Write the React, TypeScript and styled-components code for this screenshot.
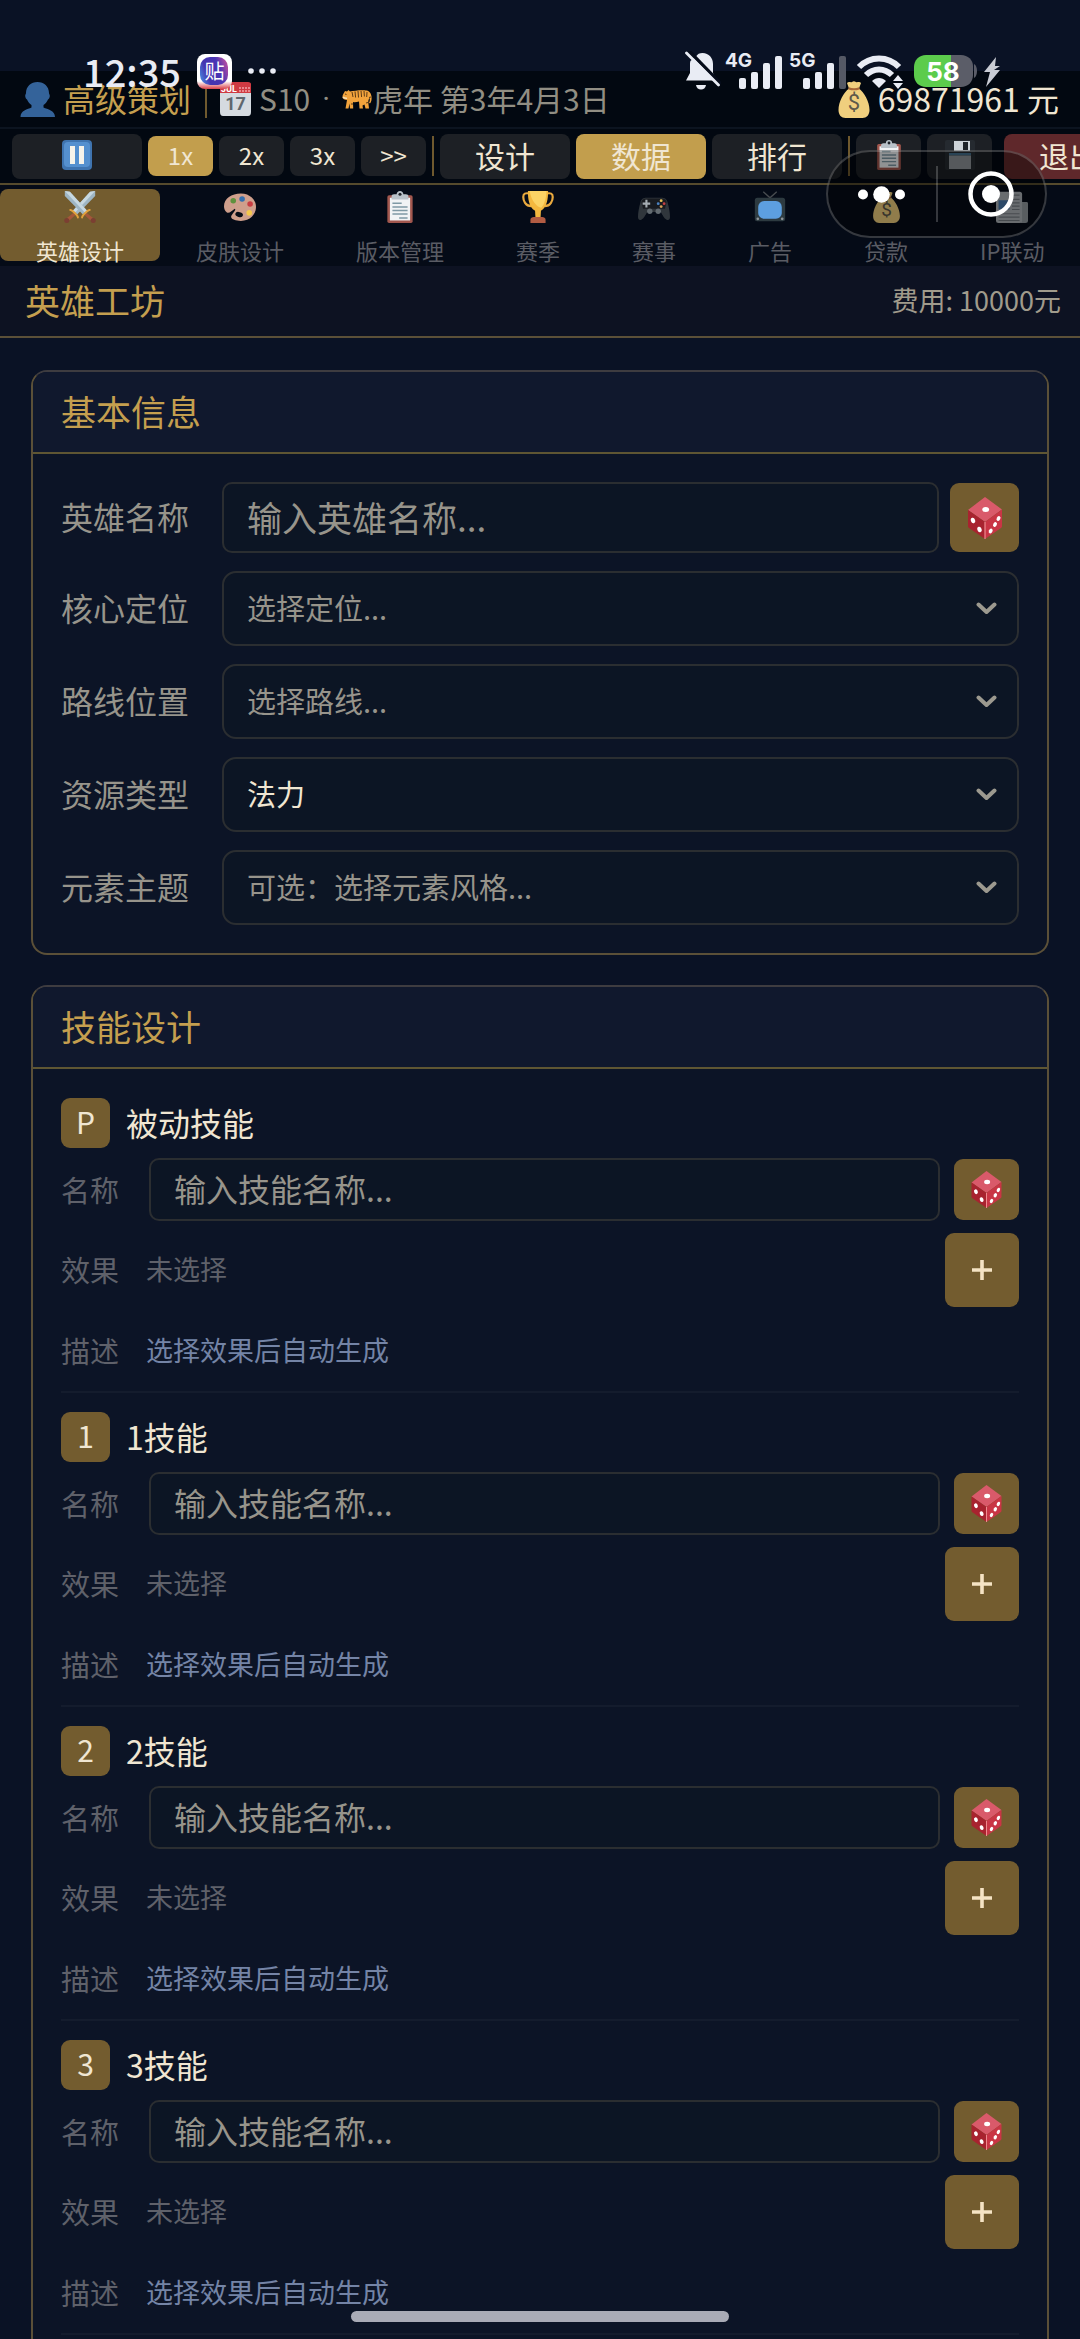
// React
import { useState } from 'react';
// Styles
import styled, { createGlobalStyle } from 'styled-components';

import type { FC, ReactNode } from 'react';

const GlobalStyle = createGlobalStyle`
  * {
    box-sizing: border-box;
  }
  body {
    margin: 0;
    background: #0a1225;
  }
  button,
  input,
  select {
    font-family: inherit;
    margin: 0;
  }
`;

const Shell = styled.div`
  position: relative;
  display: flex;
  flex-direction: column;
  height: 100vh;
  padding-top: 71px;
  overflow: hidden;
  background: #0a1225;
  color: #f0e6d2;
  font-family: 'Noto Sans CJK SC', sans-serif;
`;

/* ---------- phone overlays ---------- */

const StatusBar = styled.div`
  position: absolute;
  top: 50px;
  left: 0;
  right: 0;
  z-index: 2;
  display: flex;
  align-items: center;
  justify-content: space-between;
  height: 42px;
  padding: 0 79px 0 83px;
  color: #e9ecf4;
`;

const StatusGroup = styled.div<{ $gap: number }>`
  display: flex;
  align-items: center;
  gap: ${({ $gap }) => $gap}px;
`;

const Clock = styled.span`
  font-size: 38px;
  font-weight: 500;
  line-height: 42px;
`;

const AppBadge = styled.span`
  display: flex;
  align-items: center;
  justify-content: center;
  width: 35px;
  height: 35px;
  border-radius: 8px;
  background: linear-gradient(180deg, #fff 0%, #fff 78%, #d8404a 100%);
`;

const AppBadgeInner = styled.span`
  width: 28px;
  height: 28px;
  border-radius: 10px;
  background: linear-gradient(250deg, #d8549c 0%, #4a35b4 35%, #4434b0 70%, #4a9ae8 100%);
  color: #fff;
  font-size: 20px;
  line-height: 27px;
  text-align: center;
`;

const Capsule = styled.div`
  position: absolute;
  top: 150px;
  right: 33px;
  z-index: 2;
  display: flex;
  align-items: center;
  width: 221px;
  height: 88px;
  border: 2px solid rgba(255, 255, 255, 0.2);
  border-radius: 44px;
  background: rgba(0, 0, 0, 0.4);
`;

const CapsuleButton = styled.button`
  display: flex;
  flex: 1;
  align-items: center;
  justify-content: center;
  padding: 0;
  border: 0;
  background: none;
`;

const CapsuleLine = styled.span`
  width: 2px;
  height: 56px;
  background: rgba(255, 255, 255, 0.2);
`;

const HomeIndicator = styled.div`
  position: absolute;
  bottom: 17px;
  left: 50%;
  z-index: 2;
  width: 35%;
  height: 11px;
  border-radius: 6px;
  background: #a9abb6;
  transform: translateX(-50%);
`;

/* ---------- header ---------- */

const InfoBar = styled.header`
  display: flex;
  flex-shrink: 0;
  align-items: center;
  height: 58px;
  padding: 0 21px 0 20px;
  border-bottom: 2px solid #0c1420;
  background: #020811;
  white-space: nowrap;
`;

const Role = styled.span`
  margin-left: 8px;
  padding-bottom: 3px;
  color: #c49f4f;
  font-size: 32px;
  line-height: 40px;
`;

const Season = styled.span`
  margin: 0 12px 0 7px;
  padding-bottom: 3px;
  color: #918e83;
  font-size: 30px;
  line-height: 40px;
`;

const Dot = styled.span`
  margin-right: 12px;
  color: #918e83;
  font-family: Roboto, sans-serif;
  font-size: 30px;
  line-height: 40px;
`;

const DateText = styled(Season)`
  margin: 0 auto 0 0;
`;

const Money = styled.span`
  margin-left: 8px;
  padding-bottom: 3px;
  font-size: 32px;
  line-height: 40px;
`;

const Separator = styled.span<{ $spaced?: boolean }>`
  flex-shrink: 0;
  width: 2px;
  height: ${({ $spaced }) => ($spaced ? 38 : 40)}px;
  margin: ${({ $spaced }) => ($spaced ? '0 12px 0 14px' : '0')};
  background: #6f592e;
`;

const Toolbar = styled.div`
  display: flex;
  flex-shrink: 0;
  align-items: center;
  gap: 6px;
  height: 56px;
  padding-left: 12px;
  border-bottom: 2px solid #564b2d;
  background: #020811;
`;

const ToolButton = styled.button<{ $kind: 'speed' | 'menu' | 'icon' | 'exit'; $active?: boolean }>`
  display: flex;
  flex-shrink: 0;
  align-items: center;
  justify-content: center;
  width: ${({ $kind }) => ($kind === 'speed' || $kind === 'icon' ? 65 : 130)}px;
  height: ${({ $kind }) => ($kind === 'speed' ? 40 : 45)}px;
  margin-left: ${({ $kind }) => ($kind === 'exit' ? 6 : 0)}px;
  padding: 0 0 2px;
  border: 0;
  border-radius: 8px;
  background: ${({ $kind, $active }) => ($active ? '#c29e4d' : $kind === 'exit' ? '#5f282b' : '#1d2025')};
  color: #f0e6d2;
  font-size: ${({ $kind }) => ($kind === 'speed' ? 24 : 30)}px;
  line-height: 38px;
`;

const TabBar = styled.nav`
  display: flex;
  flex-shrink: 0;
  padding: 4px 0 5px;
  background: #050b17;
`;

const Tab = styled.button<{ $active: boolean }>`
  display: flex;
  flex-direction: column;
  flex-shrink: 0;
  align-items: center;
  justify-content: flex-start;
  gap: 16px;
  height: 72px;
  padding: 2px 36px 0;
  border: 0;
  border-radius: 8px;
  background: ${({ $active }) => ($active ? '#735c2f' : 'transparent')};
  color: ${({ $active }) => ($active ? '#f0e6d2' : '#5a5c64')};
  font-size: 22px;
  line-height: 22px;
  white-space: nowrap;
`;

const TitleBar = styled.div`
  display: flex;
  flex-shrink: 0;
  align-items: center;
  justify-content: space-between;
  height: 72px;
  padding: 0 19px 2px 25px;
  border-bottom: 2px solid #5b5038;
  background: #0d1222;
`;

const PageTitle = styled.h1`
  margin: 0;
  color: #c49f4f;
  font-size: 35px;
  font-weight: 400;
  line-height: 50px;
`;

const Cost = styled.span`
  color: #a09b8c;
  font-size: 27px;
  line-height: 40px;
`;

/* ---------- panels ---------- */

const Content = styled.main`
  display: flex;
  flex: 1;
  flex-direction: column;
  gap: 30px;
  min-height: 0;
  padding: 32px 31px;
  overflow-y: auto;
  scrollbar-width: none;
`;

const Panel = styled.section`
  flex-shrink: 0;
  border: 2px solid #5b5038;
  border-top-color: #3e3c40;
  border-radius: 16px;
  background: #0c1426;
`;

const PanelHeader = styled.h2`
  margin: 0;
  padding: 14px 28px 16px;
  border-bottom: 2px solid #5f5633;
  border-radius: 14px 14px 0 0;
  background: #10182d;
  color: #c49f4f;
  font-size: 35px;
  font-weight: 400;
  line-height: 50px;
`;

const FormBody = styled.div`
  display: flex;
  flex-direction: column;
  gap: 18px;
  padding: 28px;
`;

const FormRow = styled.div`
  display: flex;
  align-items: center;
  gap: 11px;
`;

const FormLabel = styled.label`
  flex-shrink: 0;
  width: 150px;
  padding-bottom: 3px;
  color: #97948b;
  font-size: 32px;
  line-height: 40px;
`;

const TextInput = styled.input<{ $compact?: boolean }>`
  flex: 1;
  min-width: 0;
  height: ${({ $compact }) => ($compact ? 63 : 71)}px;
  padding: 0 23px 3px;
  border: 2px solid #2b2e31;
  border-radius: 10px;
  outline: none;
  background: #0c1524;
  color: #f0e6d2;
  font-size: ${({ $compact }) => ($compact ? 32 : 35)}px;
  &::placeholder {
    color: #97948b;
    opacity: 1;
  }
`;

// select and chevron share one grid cell
const SelectBox = styled.div`
  display: grid;
  flex: 1;
  align-items: center;
  > * {
    grid-area: 1 / 1;
  }
  > svg {
    justify-self: end;
    margin-right: 22px;
    pointer-events: none;
  }
`;

const Select = styled.select<{ $filled: boolean }>`
  width: 100%;
  height: 75px;
  padding: 0 60px 3px 23px;
  appearance: none;
  border: 2px solid #2b2e31;
  border-radius: 14px;
  outline: none;
  background: #0c1524;
  color: ${({ $filled }) => ($filled ? '#f0e6d2' : '#97948b')};
  font-size: 29px;
`;

const GoldButton = styled.button<{ $width: number; $height: number }>`
  display: flex;
  flex-shrink: 0;
  align-items: center;
  justify-content: center;
  width: ${({ $width }) => $width}px;
  height: ${({ $height }) => $height}px;
  padding: 0;
  border: 0;
  border-radius: 9px;
  background: #735c2f;
`;

const SkillList = styled.div`
  padding: 29px 28px 28px;
`;

const SkillBlock = styled.article`
  display: flex;
  flex-direction: column;
  gap: 12px;
  margin-bottom: 19px;
  padding-bottom: 8px;
  border-bottom: 2px solid #141c2d;
`;

const SkillHead = styled.div`
  display: flex;
  align-items: center;
  gap: 16px;
  margin-bottom: -2px;
`;

const SkillKey = styled.span`
  width: 49px;
  height: 50px;
  border-radius: 9px;
  background: #735c2f;
  font-size: 30px;
  line-height: 47px;
  text-align: center;
`;

const SkillName = styled.h3`
  margin: 0;
  padding-bottom: 3px;
  font-size: 32px;
  font-weight: 400;
  line-height: 40px;
`;

const SkillRow = styled.div<{ $gap: number; $height: number }>`
  display: flex;
  align-items: center;
  gap: ${({ $gap }) => $gap}px;
  min-height: ${({ $height }) => $height}px;
`;

const SkillLabel = styled.label`
  flex-shrink: 0;
  width: 74px;
  padding-bottom: 2px;
  color: #5f616a;
  font-size: 29px;
  line-height: 40px;
`;

const SkillText = styled.span<{ $tone: 'muted' | 'info' }>`
  flex: 1;
  padding-bottom: 3px;
  color: ${({ $tone }) => ($tone === 'info' ? '#7484a6' : '#5f616a')};
  font-size: 27px;
  line-height: 40px;
`;

/* ---------- drawings ---------- */

const PersonIcon = () => (
  <svg width="35" height="35" viewBox="0 0 35 35">
    <path
      d="M17.500 0C24 0 29 4.500 29 11c0 1 .8 1.500.8 3s-1 3-1.800 3.500c-1.200 2.500-2.500 4.200-4.500 5.600v2.400c4 1.800 11.500 3 11.500 9.500H.500c0-6.500 7-7.700 11-9.500v-2.400c-2-1.400-3.300-3.100-4.500-5.600-.8-.5-1.800-2-1.800-3.500s.8-2 .8-3C6 4.500 11 0 17.500 0Z"
      fill="#34639a"
    />
  </svg>
);

const CalendarIcon = () => (
  <svg width="33" height="34" viewBox="0 0 33 34">
    <path d="M1 2h31v28c0 2.500-1 4-3 4H4c-2 0-3-1.500-3-4Z" fill="#d5dae0" />
    <path d="M1 2c0-1.200 1-2 2-2h26c2 0 3 1 3 2v9H1Z" fill="#cf3a42" />
    <text x="2" y="10" fontSize="9" fontWeight="700" fontFamily="Roboto, sans-serif" fill="#fff">
      JUL
    </text>
    <path d="M20 6h11M20 9h11" stroke="#f1a3a6" strokeWidth="1.500" strokeDasharray="2 1" />
    <text
      x="16.500"
      y="28"
      fontSize="18"
      fontWeight="700"
      fontFamily="Roboto, sans-serif"
      fill="#5f676e"
      textAnchor="middle"
    >
      17
    </text>
  </svg>
);

const TigerIcon = () => (
  <svg width="31" height="22" viewBox="0 0 31 22">
    <path
      d="M1 6.500 3 3l2 .5L6.500 2 8 3.500C12 3 18 2 24 2.500c3 0 5 2.500 5.500 6 .4 3-.2 5.500-1.500 7l-1-.8c.8-1.200 1-3.200.6-5L26.500 12c-.5 2 0 4 .5 8.500h-3.500l-1-4-2 1 .5 3H17.500L17 13.500c-2 .8-4.500 1-6 .6l.2 6.400H8l-.5-5-1 5H3.500L5 12C2.500 12 .8 11 .5 9.500c-.2-1 .1-2 .5-3Z"
      fill="#f2a33c"
    />
    <path
      d="M10 4l1 5M13 3.500l.6 6M16 3l.5 6.500M19 3l.6 6M22 3l.4 5.500M25 4l-.3 5M29 9l-2 .5M9 16h2M24 15l2-.5M3 6l1.500.5"
      stroke="#5b3a16"
      strokeWidth="1"
    />
    <path d="M1 9c1 1 2.500 1.500 4 1.300" stroke="#f7e0b8" strokeWidth="1.500" fill="none" />
  </svg>
);

const MoneyBagIcon: FC<{ size?: number }> = ({ size = 37 }) => (
  <svg width={size - 5} height={size} viewBox="0 0 32 37">
    <path
      d="M9 2c2-2 3.500 0 5-1 1.500-1.300 2.500-1 4 0 1.500.8 3-1 5 1l-2 5.500c5 4 10.500 13 10.500 21.500 0 5-3 8-7 8H7.500c-4 0-7-3-7-8C.5 21 5.500 11.500 11 7.500Z"
      fill="#f0cf7e"
    />
    <path d="M10.500 7.200c3 1.200 8 1.200 11 0" stroke="#a8683a" strokeWidth="2" fill="none" />
    <text x="16" y="29" fontSize="22" fontFamily="Roboto, sans-serif" fill="#5e594b" textAnchor="middle">
      $
    </text>
  </svg>
);

const PauseIcon = () => (
  <svg width="30" height="30" viewBox="0 0 30 30">
    <rect width="30" height="30" rx="4" fill="#3f74b0" />
    <rect x="2" y="2" width="26" height="25" rx="4" fill="#5590cf" />
    <path d="M8 6h5v18H8ZM17 6h5v18h-5Z" fill="#f7f3ea" />
  </svg>
);

const ClipboardIcon: FC<{ size: number }> = ({ size }) => (
  <svg width={size} height={size} viewBox="0 0 38 38">
    <rect x="4" y="5" width="30" height="33" rx="2" fill="#a2574e" />
    <path d="M7 8h24v27H7Z" fill="#f1f3f5" />
    <path d="M9 10V6.500c0-1.500 1-2.500 3-2.500h3c0-2.500 1.800-4 4-4s4 1.500 4 4h3c2 0 3 1 3 2.500V10Z" fill="#b9c2c9" />
    <circle cx="19" cy="3.800" r="1.800" fill="#20252b" />
    <path d="M10 14.500h11M10 19h18M10 23.200h18M10 27.400h18M18 32h10" stroke="#7f99a5" strokeWidth="1.800" />
  </svg>
);

const FloppyIcon = () => (
  <svg width="30" height="30" viewBox="0 0 30 30">
    <rect width="30" height="30" rx="2" fill="#252a30" />
    <path d="M9 1h16v10H9Z" fill="#cdd4d9" />
    <path d="M18 2h5v8h-5Z" fill="#1d2329" />
    <path d="M4 13h22v2.500H4Z" fill="#45708e" />
    <path d="M4 15.500h22V29H4Z" fill="#8f9499" />
  </svg>
);

const SwordsIcon = () => (
  <svg width="38" height="38" viewBox="0 0 38 38">
    {[false, true].map((flip) => (
      <g key={String(flip)} transform={flip ? 'translate(38 0) scale(-1 1)' : undefined}>
        <path d="M37 0v6L15.500 28l-5-4.500L31 1Z" fill="#9fb6c4" />
        <path d="M37 0 13 25.700l-2.500-2.200L31 1Z" fill="#c7d8e1" />
        <path d="m11 26 2.500 2.500-7 6.500-3-3Z" fill="#a4573a" />
        <path d="M7.500 22.500c1.500-.5 9.500 7 9 9" stroke="#e0a03c" strokeWidth="2.400" strokeLinecap="round" fill="none" />
        <circle cx="3.300" cy="35" r="3" fill="#7b3f32" />
      </g>
    ))}
  </svg>
);

const PaletteIcon = () => (
  <svg width="38" height="38" viewBox="0 0 38 38">
    <path
      d="M20 3c11 0 18 7.500 18 16s-7 16.500-18 16.500c-6 0-11-1.500-11.500-4.500-.3-2.500 3.500-5 5-9l-.8-1C10 23 6 27 3.500 25.500 1 23.500 0 21 0 18 0 9 9 3 20 3Z"
      fill="#cf9f8c"
    />
    <ellipse cx="18" cy="28" rx="4.600" ry="3" transform="rotate(15 18 28)" fill="#070c16" />
    <circle cx="11" cy="11.500" r="3.300" fill="#5f913d" />
    <circle cx="21.500" cy="9.500" r="3.300" fill="#356fae" />
    <circle cx="31" cy="15.500" r="3.300" fill="#c83d43" />
    <circle cx="30" cy="26" r="3.300" fill="#f5c84c" />
  </svg>
);

const TrophyIcon = () => (
  <svg width="38" height="38" viewBox="0 0 38 38">
    <path
      d="M9 3C4 2 1.500 3 1.500 7S4 18 11 18M29 3c5-1 7.500 0 7.500 4S34 18 27 18"
      stroke="#e9a93e"
      strokeWidth="2.600"
      fill="none"
    />
    <path d="M7 0h24c0 9-1 19-8.500 23.500L22 32h-6l-.5-8.500C8 19 7 9 7 0Z" fill="#f3b83f" />
    <path d="M9 0h20c0 8-2 15-6 20-6-1-12-9-14-20Z" fill="#fbd365" />
    <path d="M10 34c0-2 2-3 4-3h10c2 0 4 1 4 3v4H10Z" fill="#b25c43" />
  </svg>
);

const GamepadIcon = () => (
  <svg width="38" height="38" viewBox="0 0 38 38">
    <path
      d="M3 13c1-4 4-5 7-5h18c3 0 6 1 7 5 2 7 3 13 3 18 0 3-2 4-4 3-3-1-5-6-7-9H11c-2 3-4 8-7 9-2 1-4 0-4-3 0-5 1-11 3-18Z"
      fill="#30363c"
    />
    <path d="M4 13c1-3 3-4 6-4h18c3 0 5 1 6 4l-2 8H6Z" fill="#181b20" />
    <path d="M10 10.500v9M5.500 15h9" stroke="#a5adb3" strokeWidth="2.500" />
    <circle cx="14" cy="24" r="3.200" fill="#626a70" />
    <circle cx="24" cy="24" r="3.200" fill="#626a70" />
    <circle cx="27.500" cy="11.500" r="1.700" fill="#e8c35a" />
    <circle cx="31" cy="15" r="1.700" fill="#c44043" />
    <circle cx="24" cy="15" r="1.700" fill="#4b82c0" />
    <circle cx="27.500" cy="18.500" r="1.700" fill="#d8a258" />
  </svg>
);

const TvIcon = () => (
  <svg width="38" height="38" viewBox="0 0 38 38">
    <path d="m11 1 8 7 8-7" stroke="#484c50" strokeWidth="1.600" fill="none" />
    <rect x="1" y="8" width="36" height="28" rx="3" fill="#2d3a40" />
    <rect x="5" y="12" width="28" height="21" rx="7" fill="#5d9fe0" />
    <circle cx="4.500" cy="33" r="1.600" fill="#8d9499" />
    <circle cx="33.500" cy="33" r="1.600" fill="#8d9499" />
  </svg>
);

const NewspaperIcon = () => (
  <svg width="38" height="38" viewBox="0 0 38 38">
    <path d="M29 13h7c1.500 0 2 .8 2 2v20c0 2-1 3-3 3h-6Z" fill="#959ba1" />
    <rect x="0" y="1" width="31" height="37" rx="3" fill="#b0b5ba" />
    <path d="M3 11h13v11H3Z" fill="#4a7aae" />
    <path
      d="M19 5h9M19 10h9M19 14h9M19 18h9M19 22h9M3 27h25M3 31h25M3 35h25"
      stroke="#777e84"
      strokeWidth="1.400"
    />
  </svg>
);

const DiceIcon: FC<{ size: number }> = ({ size }) => (
  <svg width={size} height={size} viewBox="0 0 42 42">
    <path d="M21 0 38 12.500 21 25 4 13Z" fill="#d95a6a" />
    <path d="M4 13 21 25v17L5 31c-.7-.5-1-1-1-2Z" fill="#a8232f" />
    <path d="M38 12.500 21 25v17l16-11c.7-.5 1-1 1-2Z" fill="#c93545" />
    <path d="M21 25v17" stroke="#ee8b8f" strokeWidth="1.200" />
    <ellipse cx="21.700" cy="12.500" rx="3.400" ry="2.500" fill="#fff" />
    <ellipse cx="9" cy="23.500" rx="2.100" ry="2.800" fill="#fff" transform="rotate(-20 9 23.500)" />
    <ellipse cx="15.500" cy="32.500" rx="2.100" ry="2.800" fill="#fff" transform="rotate(-20 15.500 32.500)" />
    <ellipse cx="34.500" cy="21.500" rx="1.800" ry="2.600" fill="#fff" transform="rotate(25 34.500 21.500)" />
    <ellipse cx="31" cy="27.500" rx="1.800" ry="2.600" fill="#fff" transform="rotate(25 31 27.500)" />
    <ellipse cx="26.700" cy="34" rx="1.800" ry="2.600" fill="#fff" transform="rotate(25 26.700 34)" />
  </svg>
);

const PlusIcon = () => (
  <svg width="20" height="20" viewBox="0 0 20 20">
    <path d="M10 0v20M0 10h20" stroke="#f5e3c4" strokeWidth="3.600" />
  </svg>
);

const ChevronIcon = () => (
  <svg width="21" height="13" viewBox="0 0 21 13">
    <path
      d="m2.500 2.500 8 7.500 8-7.500"
      stroke="#9c998f"
      strokeWidth="4"
      strokeLinecap="round"
      strokeLinejoin="round"
      fill="none"
    />
  </svg>
);

const MutedBellIcon = () => (
  <svg width="36" height="40" viewBox="0 0 36 40">
    <path d="M11 5.500C12.500 3 14.500 2 17.500 2 24 2 28 7 28 13v9l3.500 7.500H1L5 22v-9c0-1 .1-2 .4-3Z" fill="#e9ecf4" />
    <path d="M11 34h10c-.5 3-2.500 4.500-5 4.500S11.500 37 11 34Z" fill="#e9ecf4" />
    <path d="m4 0 32 33" stroke="#060c1a" strokeWidth="3.500" />
    <path d="m1.500 2 32 32" stroke="#e9ecf4" strokeWidth="2.800" strokeLinecap="round" />
  </svg>
);

const SignalIcon: FC<{ label: string; full: boolean }> = ({ label, full }) => (
  <svg width="60" height="40" viewBox="0 0 60 40">
    <text x="0" y="16" fontSize="19" fontWeight="700" fontFamily="Inter, sans-serif" fill="#e9ecf4">
      {label}
    </text>
    <rect x="14" y="27" width="7" height="11" rx="2" fill="#e9ecf4" />
    <rect x="26" y="21" width="7" height="17" rx="2" fill="#e9ecf4" />
    <rect x="38" y="12" width="7" height="26" rx="2" fill="#e9ecf4" />
    <rect x="50" y="5" width="7" height="33" rx="2" fill={full ? '#e9ecf4' : '#555965'} />
  </svg>
);

const WifiIcon = () => (
  <svg width="54" height="40" viewBox="0 0 54 40">
    <path d="M6 16c11-11.500 29-11.500 40 0" stroke="#e9ecf4" strokeWidth="6" fill="none" />
    <path d="M13 24c7.500-7.500 18.500-7.500 26 0" stroke="#e9ecf4" strokeWidth="6" fill="none" />
    <path d="M19 30c4-4 10-4 14 0l-7 7Z" fill="#e9ecf4" />
    <path d="m45 24 5 6H40ZM45 38l5-6H40Z" fill="#e9ecf4" />
  </svg>
);

const BatteryIcon = () => (
  <svg width="68" height="40" viewBox="0 0 68 40">
    <path d="M39 4h11c7 0 12 5 12 11v9c0 7-5 12-12 12H39Z" fill="#5b5d68" />
    <path d="M63 13c2 1 3 4 3 7s-1 6-3 7Z" fill="#5b5d68" />
    <path d="M15 4h25v32H15C8 36 3 31 3 24v-8C3 9 8 4 15 4Z" fill="#5ccc4c" />
    <text x="32" y="30" fontSize="26" fontWeight="700" fontFamily="Inter, sans-serif" fill="#fff" textAnchor="middle">
      58
    </text>
  </svg>
);

const BoltIcon = () => (
  <svg width="18" height="40" viewBox="0 0 18 40">
    <path d="M13 6 1 21h6L3 36 17 19h-6l6-4h-5Z" fill="#c9ccd4" />
  </svg>
);

/* ---------- data ---------- */

const TABS: { label: string; icon: ReactNode }[] = [
  { label: '英雄设计', icon: <SwordsIcon /> },
  { label: '皮肤设计', icon: <PaletteIcon /> },
  { label: '版本管理', icon: <ClipboardIcon size={38} /> },
  { label: '赛季', icon: <TrophyIcon /> },
  { label: '赛事', icon: <GamepadIcon /> },
  { label: '广告', icon: <TvIcon /> },
  { label: '贷款', icon: <MoneyBagIcon size={38} /> },
  { label: 'IP联动', icon: <NewspaperIcon /> },
];

const SPEEDS = ['1x', '2x', '3x', '>>'];
const MENUS = ['设计', '数据', '排行'];

const SELECTS = [
  { id: 'role', label: '核心定位', text: '选择定位...', filled: false },
  { id: 'lane', label: '路线位置', text: '选择路线...', filled: false },
  { id: 'resource', label: '资源类型', text: '法力', filled: true },
  { id: 'element', label: '元素主题', text: '可选：选择元素风格...', filled: false },
];

const SKILLS = [
  { key: 'P', name: '被动技能' },
  { key: '1', name: '1技能' },
  { key: '2', name: '2技能' },
  { key: '3', name: '3技能' },
];

const Skill: FC<{ skillKey: string; name: string }> = ({ skillKey, name }) => (
  <SkillBlock>
    <SkillHead>
      <SkillKey>{skillKey}</SkillKey>
      <SkillName>{name}</SkillName>
    </SkillHead>
    <SkillRow $gap={14} $height={63}>
      <SkillLabel htmlFor={`skill-${skillKey}`}>名称</SkillLabel>
      <TextInput $compact id={`skill-${skillKey}`} placeholder="输入技能名称..." />
      <GoldButton $width={65} $height={61} aria-label="随机名称">
        <DiceIcon size={37} />
      </GoldButton>
    </SkillRow>
    <SkillRow $gap={11} $height={74}>
      <SkillLabel as="span">效果</SkillLabel>
      <SkillText $tone="muted">未选择</SkillText>
      <GoldButton $width={74} $height={74} aria-label="添加效果">
        <PlusIcon />
      </GoldButton>
    </SkillRow>
    <SkillRow $gap={11} $height={64}>
      <SkillLabel as="span">描述</SkillLabel>
      <SkillText $tone="info">选择效果后自动生成</SkillText>
    </SkillRow>
  </SkillBlock>
);

const App: FC = () => {
  const [speed, setSpeed] = useState('1x');
  const [menu, setMenu] = useState('数据');
  const [tab, setTab] = useState('英雄设计');

  return (
    <>
      <GlobalStyle />
      <Shell>
        <InfoBar>
          <PersonIcon />
          <Role>高级策划</Role>
          <Separator $spaced />
          <CalendarIcon />
          <Season>S10</Season>
          <Dot>·</Dot>
          <TigerIcon />
          <DateText>虎年 第3年4月3日</DateText>
          <MoneyBagIcon />
          <Money>69871961 元</Money>
        </InfoBar>

        <Toolbar>
          <ToolButton $kind="menu" aria-label="暂停">
            <PauseIcon />
          </ToolButton>
          {SPEEDS.map((s) => (
            <ToolButton key={s} $kind="speed" $active={s === speed} onClick={() => setSpeed(s)}>
              {s}
            </ToolButton>
          ))}
          <Separator />
          {MENUS.map((m) => (
            <ToolButton key={m} $kind="menu" $active={m === menu} onClick={() => setMenu(m)}>
              {m}
            </ToolButton>
          ))}
          <Separator />
          <ToolButton $kind="icon" aria-label="记录">
            <ClipboardIcon size={30} />
          </ToolButton>
          <ToolButton $kind="icon" aria-label="保存">
            <FloppyIcon />
          </ToolButton>
          <ToolButton $kind="exit">退出</ToolButton>
        </Toolbar>

        <TabBar>
          {TABS.map(({ label, icon }) => (
            <Tab key={label} $active={label === tab} onClick={() => setTab(label)}>
              {icon}
              <span>{label}</span>
            </Tab>
          ))}
        </TabBar>

        <TitleBar>
          <PageTitle>英雄工坊</PageTitle>
          <Cost>费用: 10000元</Cost>
        </TitleBar>

        <Content>
          <Panel>
            <PanelHeader>基本信息</PanelHeader>
            <FormBody>
              <FormRow>
                <FormLabel htmlFor="hero-name">英雄名称</FormLabel>
                <TextInput id="hero-name" placeholder="输入英雄名称..." />
                <GoldButton $width={69} $height={69} aria-label="随机名称">
                  <DiceIcon size={42} />
                </GoldButton>
              </FormRow>
              {SELECTS.map(({ id, label, text, filled }) => (
                <FormRow key={id}>
                  <FormLabel htmlFor={id}>{label}</FormLabel>
                  <SelectBox>
                    <Select id={id} $filled={filled}>
                      <option>{text}</option>
                    </Select>
                    <ChevronIcon />
                  </SelectBox>
                </FormRow>
              ))}
            </FormBody>
          </Panel>

          <Panel>
            <PanelHeader>技能设计</PanelHeader>
            <SkillList>
              {SKILLS.map((skill) => (
                <Skill key={skill.key} skillKey={skill.key} name={skill.name} />
              ))}
            </SkillList>
          </Panel>
        </Content>

        <StatusBar>
          <StatusGroup $gap={16}>
            <Clock>12:35</Clock>
            <AppBadge>
              <AppBadgeInner>贴</AppBadgeInner>
            </AppBadge>
            <svg width="28" height="6" viewBox="0 0 28 6" fill="#e9ecf4">
              <circle cx="3" cy="3" r="2.800" />
              <circle cx="14" cy="3" r="2.800" />
              <circle cx="25" cy="3" r="2.800" />
            </svg>
          </StatusGroup>
          <StatusGroup $gap={4}>
            <MutedBellIcon />
            <SignalIcon label="4G" full />
            <SignalIcon label="5G" full={false} />
            <WifiIcon />
            <BatteryIcon />
            <BoltIcon />
          </StatusGroup>
        </StatusBar>

        <Capsule>
          <CapsuleButton aria-label="更多">
            <svg width="47" height="17" viewBox="0 0 47 17" fill="#fff">
              <circle cx="5" cy="8.500" r="5" />
              <circle cx="23.500" cy="8.500" r="8.300" />
              <circle cx="42" cy="8.500" r="5" />
            </svg>
          </CapsuleButton>
          <CapsuleLine />
          <CapsuleButton aria-label="关闭">
            <svg width="46" height="46" viewBox="0 0 46 46">
              <circle cx="23" cy="23" r="20.500" fill="none" stroke="#fff" strokeWidth="4.500" />
              <circle cx="23" cy="23" r="9" fill="#fff" />
            </svg>
          </CapsuleButton>
        </Capsule>

        <HomeIndicator />
      </Shell>
    </>
  );
};

export default App;
